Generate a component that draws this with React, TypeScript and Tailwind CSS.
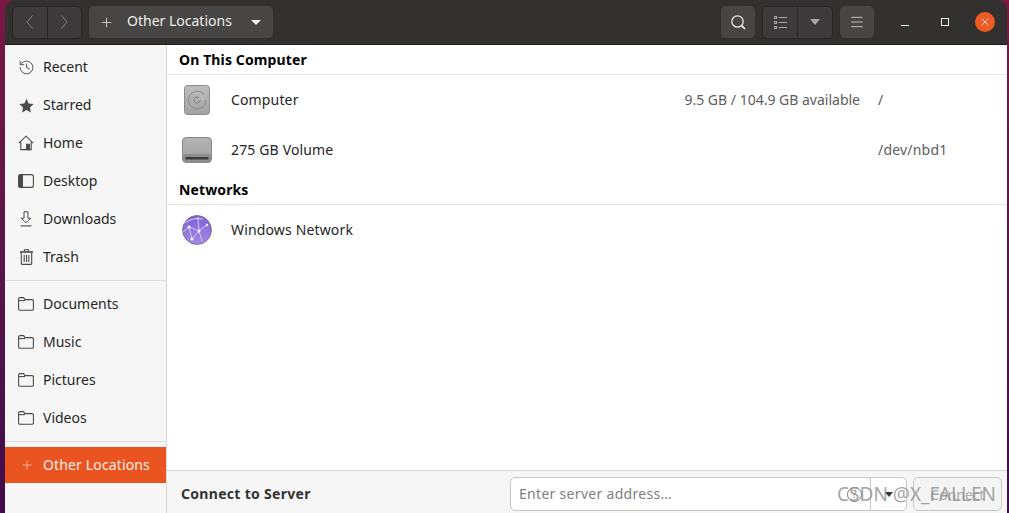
import React from 'react';
import { Menu, X, Plus, History } from 'lucide-react';

const IconHome = () => (
  <svg width="16" height="16" viewBox="0 0 16 16" fill="none" stroke="#4a4a4a" strokeWidth="1.1">
    <path d="M0.8 8.2 8 1.2l7.2 7M2.8 7v7.6h10.4V7" />
    <path d="M8.6 9.2h2.8v5.4H8.6z" fill="#4a4a4a" />
  </svg>
);

const IconDesktop = () => (
  <svg width="16" height="14" viewBox="0 0 16 14" fill="none">
    <rect x="0.6" y="0.6" width="14.8" height="12.8" rx="2" stroke="#4a4a4a" strokeWidth="1.1" />
    <path d="M2.5 0.6H5v12.8H2.5a2 2 0 0 1-2-2V2.6a2 2 0 0 1 2-2z" fill="#4a4a4a" />
  </svg>
);

const IconFolder = () => (
  <svg width="16" height="14" viewBox="0 0 16 14" fill="none" stroke="#4a4a4a" strokeWidth="1.1">
    <path d="M2 .6h3.6l1.4 2h7a1.4 1.4 0 0 1 1.4 1.4v7.9a1.4 1.4 0 0 1-1.4 1.4H2A1.4 1.4 0 0 1 .6 11.9V2A1.4 1.4 0 0 1 2 .6z" />
    <path d="M.6 3.6h6.4" />
  </svg>
);

const IconStar = () => (
  <svg width="15" height="15" viewBox="0 0 15 15" fill="#4a4a4a">
    <path d="M7.5.8l2.1 4.6 5 .6-3.7 3.4 1 5-4.4-2.5-4.4 2.5 1-5L.4 6l5-.6z" />
  </svg>
);

const IconDownload = () => (
  <svg width="12" height="16" viewBox="0 0 12 16" fill="none" stroke="#4a4a4a" strokeWidth="1">
    <path d="M4 .8h4v6.4h2.8L6 11.8 1.2 7.2H4z" />
    <path d="M.5 14.9h11" strokeWidth="1.1" />
  </svg>
);

const IconTrash = () => (
  <svg width="13" height="16" viewBox="0 0 13 16" fill="none" stroke="#4a4a4a" strokeWidth="1.1">
    <path d="M0 3h13" strokeWidth="1.6" />
    <path d="M4.4 2.6V.8h4.2v1.8" />
    <path d="M1.3 3.4v11a1 1 0 0 0 1 1h8.4a1 1 0 0 0 1-1v-11" />
    <path d="M4.2 6v7M6.5 6v7M8.8 6v7" />
  </svg>
);

const IconDisk = () => (
  <svg width="27" height="30" viewBox="0 0 27 30">
    <defs>
      <linearGradient id="diskg" x1="0" y1="0" x2="0" y2="1">
        <stop offset="0" stopColor="#bdbdbd" />
        <stop offset="1" stopColor="#a2a2a2" />
      </linearGradient>
    </defs>
    <rect x="0.5" y="0.5" width="25" height="29" rx="3" fill="url(#diskg)" stroke="#8c8c8c" />
    <path d="M20 9.5a8.800 8.800 0 1 0 2 5.500" fill="none" stroke="#8a8a8a" />
    <path d="M16 15a3 3 0 1 1-1-2.200" fill="none" stroke="#7e7e7e" />
    <path d="M17 10.500a6 6 0 0 1 1.500 4.500" fill="none" stroke="#d0d0d0" />
  </svg>
);

const IconVolume = () => (
  <svg width="30" height="26" viewBox="0 0 30 26">
    <defs>
      <linearGradient id="volg" x1="0" y1="0" x2="0" y2="1">
        <stop offset="0" stopColor="#b4b4b4" />
        <stop offset="1" stopColor="#a0a0a0" />
      </linearGradient>
    </defs>
    <rect x="0.5" y="0.5" width="29" height="25" rx="3.500" fill="url(#volg)" stroke="#888888" />
    <rect x="1" y="17" width="28" height="8" rx="3" fill="#8d8d8d" />
    <rect x="3.500" y="20" width="23" height="2.500" fill="#3c3c3c" />
  </svg>
);

const IconNetwork = () => (
  <svg width="30" height="30" viewBox="0 0 30 30">
    <defs>
      <linearGradient id="netg" x1="0" y1="0" x2="0" y2="1">
        <stop offset="0" stopColor="#7f5fd8" />
        <stop offset="1" stopColor="#a48ae4" />
      </linearGradient>
    </defs>
    <circle cx="15" cy="15" r="14.400" fill="url(#netg)" stroke="#77738a" />
    <path d="M2 8 Q12 2 21 4M7 12l10 4 8-6M7 12l3 12M17 16l-7 8M17 16l3 10M17 16l-1-13M1 17l6-5" fill="none" stroke="#d8d0f4" strokeWidth="0.9" />
    <g fill="#f4f1fd">
      <circle cx="7" cy="12" r="1.500" />
      <circle cx="17" cy="16" r="1.500" />
      <circle cx="10" cy="24" r="1.500" />
      <circle cx="25" cy="10" r="1.200" />
      <circle cx="16" cy="3.500" r="1" />
    </g>
  </svg>
);

const places = [
  { label: 'Recent', icon: <History size={17} strokeWidth={1.3} color="#4a4a4a" /> },
  { label: 'Starred', icon: <IconStar /> },
  { label: 'Home', icon: <IconHome /> },
  { label: 'Desktop', icon: <IconDesktop /> },
  { label: 'Downloads', icon: <IconDownload /> },
  { label: 'Trash', icon: <IconTrash /> },
];

const folders = ['Documents', 'Music', 'Pictures', 'Videos'];

const SideRow = ({ icon, label }: { icon: React.ReactNode; label: string }) => (
  <div className="flex h-[38px] items-center text-[#262626]">
    <span className="flex w-[38px] justify-center pl-[4px]">{icon}</span>
    <span className="mb-[2px]">{label}</span>
  </div>
);

const Row = ({ icon, name, info, path, h }: { icon: React.ReactNode; name: string; info?: string; path?: string; h: string }) => (
  <div className={`flex items-center text-[#262626] ${h}`}>
    <span className="flex w-[60px] justify-center">{icon}</span>
    <span className="mb-[2px] ml-[4px] flex-1 tracking-[0.15px]">{name}</span>
    {info && <span className="mb-[2px] w-[200px] text-right text-[#5d5d5d]">{info}</span>}
    {path && <span className="mb-[2px] w-[147px] pl-[18px] tracking-[0.2px] text-[#5d5d5d]">{path}</span>}
  </div>
);

export default function App() {
  return (
    <div className="flex h-[513px] w-[1009px] overflow-hidden bg-gradient-to-b from-[#7a1742] to-[#3e0c4c] pl-[5px] pr-[2px] font-['Noto_Sans',sans-serif] text-[14px]">
      <div className="flex min-w-0 flex-1 flex-col">
        <header className="flex h-[45px] shrink-0 items-center rounded-t-[10px] border-b border-[#201e1e] bg-[#333030] pl-[7px] text-[#eeeeec]">
          <div className="flex h-[33px] w-[70px] rounded-[5px] border border-[#272525] bg-[#3c3a3a]">
            <span className="flex flex-1 items-center justify-center border-r border-[#272525]">
              <svg width="8" height="14" viewBox="0 0 8 14" fill="none" stroke="#858383"><path d="M6.500.5 1 7l5.500 6.500" /></svg>
            </span>
            <span className="flex flex-1 items-center justify-center">
              <svg width="8" height="14" viewBox="0 0 8 14" fill="none" stroke="#858383"><path d="M1.500.5 7 7l-5.500 6.500" /></svg>
            </span>
          </div>
          <div className="ml-[7px] flex h-[32px] w-[184px] items-center rounded-[5px] bg-[#484644] pl-[10px]">
            <Plus size={15} strokeWidth={1.2} />
            <span className="mb-[3px] ml-[13px] flex-1">Other Locations</span>
            <span className="mr-[12px] h-0 w-0 border-x-[5px] border-t-[5px] border-x-transparent border-t-[#eeeeec]" />
          </div>
          <div className="ml-auto flex items-center pr-[2px]">
            <span className="flex h-[32px] w-[34px] items-center justify-center rounded-[5px] bg-[#484644]">
              <svg width="15" height="15" viewBox="0 0 15 15" fill="none" stroke="#eeeeec" strokeWidth="1.200">
                <circle cx="6.500" cy="6.500" r="5.700" />
                <path d="m10.700 10.700 3.300 3.300" strokeWidth="1.700" />
              </svg>
            </span>
            <div className="ml-[7px] flex h-[33px] w-[71px] rounded-[5px] border border-[#272525] bg-[#3c3a3a]">
              <span className="flex flex-1 items-center justify-center border-r border-[#272525]">
                <svg width="13" height="13" viewBox="0 0 13 13" fill="none" stroke="#a8a6a6">
                  <path d="M4.500 1.500H13M4.500 6.500H13M4.500 11.500H13" />
                  <rect x="0.500" y="0.500" width="2" height="2" />
                  <rect x="0.500" y="5.500" width="2" height="2" />
                  <rect x="0.500" y="10.500" width="2" height="2" />
                </svg>
              </span>
              <span className="flex flex-1 items-center justify-center">
                <span className="h-0 w-0 border-x-[5px] border-t-[6px] border-x-transparent border-t-[#a8a6a6]" />
              </span>
            </div>
            <span className="ml-[7px] flex h-[32px] w-[34px] items-center justify-center rounded-[5px] bg-[#484644]"><Menu size={16} strokeWidth={1.100} /></span>
            <span className="ml-[11px] flex w-[40px] justify-center"><span className="mt-[6px] h-px w-[8px] bg-[#eeeeec]" /></span>
            <span className="flex w-[40px] justify-center"><span className="h-[8px] w-[8px] border border-[#eeeeec]" /></span>
            <span className="ml-[10px] mr-[10px] flex h-[20px] w-[20px] items-center justify-center rounded-full bg-[#ee5a24]"><X size={12} strokeWidth={1.600} color="#ffffff" /></span>
          </div>
        </header>

        <div className="flex min-h-0 flex-1">
          <aside className="flex w-[162px] shrink-0 flex-col border-r border-[#d6d6d6] bg-[#f6f6f6]">
            <div className="flex flex-col pt-[3px]">
              {places.map((p) => <SideRow key={p.label} icon={p.icon} label={p.label} />)}
            </div>
            <div className="mt-[4px] border-t border-[#dcdcdc] pt-[4px]">
              {folders.map((f) => <SideRow key={f} icon={<IconFolder />} label={f} />)}
            </div>
            <div className="mt-[4px] border-t border-[#dcdcdc] pt-[5px]">
              <div className="flex h-[36px] items-center bg-[#e95420] text-[#fdeee8]">
                <span className="flex w-[38px] justify-center pl-[6px]"><Plus size={14} strokeWidth={1} /></span>
                <span className="mb-[2px] tracking-[0.14px]">Other Locations</span>
              </div>
            </div>
          </aside>

          <main className="flex min-w-0 flex-1 flex-col bg-white">
            <div className="flex-1">
              <h2 className="flex h-[30px] items-center border-b border-[#e4e4e4] pl-[12px] font-bold tracking-[0.12px] text-black">On This Computer</h2>
              <Row h="h-[50px]" icon={<IconDisk />} name="Computer" info="9.5 GB / 104.9 GB available" path="/" />
              <Row h="h-[50px]" icon={<IconVolume />} name="275 GB Volume" path="/dev/nbd1" />
              <h2 className="flex h-[30px] items-center border-b border-[#e4e4e4] pl-[12px] font-bold tracking-[0.12px] text-black">Networks</h2>
              <Row h="h-[50px]" icon={<IconNetwork />} name="Windows Network" />
            </div>
            <footer className="relative flex h-[43px] shrink-0 items-center border-t border-[#cfcfcf] bg-[#f6f6f6] pl-[14px] pr-[5px] pt-[4px]">
              <span className="mb-[2px] flex-1 font-bold tracking-[0.3px] text-[#333333]">Connect to Server</span>
              <div className="flex h-[34px] w-[397px] items-center rounded-[5px] border border-[#cdc7c2] bg-white">
                <span className="mb-[2px] flex-1 pl-[8px] tracking-[0.3px] text-[#7f7f7f]">Enter server address…</span>
                <span className="mr-[8px] flex h-[15px] w-[15px] items-center justify-center rounded-full border border-[#7a7a7a] text-[10px] text-[#7a7a7a]">?</span>
                <span className="flex h-full w-[36px] items-center justify-center border-l border-[#cdc7c2]">
                  <span className="h-0 w-0 border-x-[4px] border-t-[5px] border-x-transparent border-t-[#333333]" />
                </span>
              </div>
              <div className="ml-[6px] flex h-[34px] w-[89px] items-center justify-center rounded-[5px] border border-[#cdc7c2] bg-[#f4f4f4] text-[#a8a8a8]">Connect</div>
              <span className="absolute right-[11px] top-[10px] text-[19px] leading-[26px] text-[#8c8c8c]/80">CSDN @X_FALLEN</span>
            </footer>
          </main>
        </div>
      </div>
    </div>
  );
}
